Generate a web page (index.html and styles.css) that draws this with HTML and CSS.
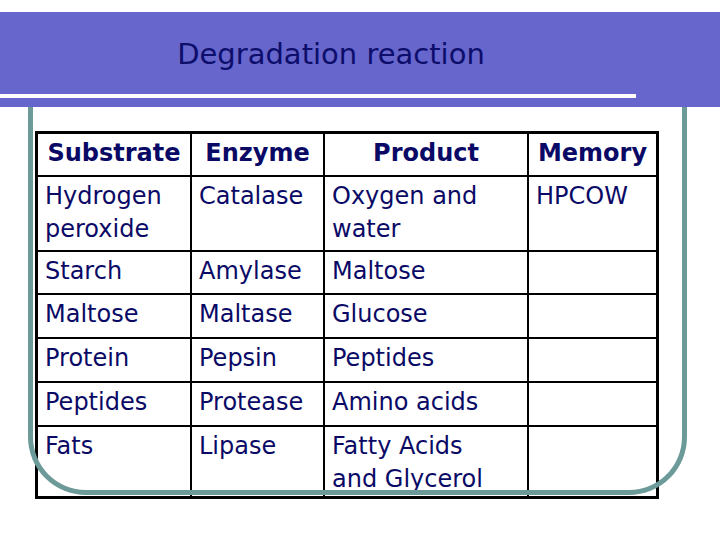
FILE: index.html
```html
<!DOCTYPE html>
<html>
<head>
<meta charset="utf-8">
<link rel="stylesheet" href="styles.css">
</head>
<body>
<div class="slide">
  <header class="band">
    <h1 class="title">Degradation reaction</h1>
    <div class="stripe"></div>
  </header>
  <div class="frame">
    <div class="grid">
      <div class="cell head">Substrate</div>
      <div class="cell head">Enzyme</div>
      <div class="cell head">Product</div>
      <div class="cell head">Memory</div>

      <div class="cell">Hydrogen<br>peroxide</div>
      <div class="cell">Catalase</div>
      <div class="cell">Oxygen and<br>water</div>
      <div class="cell">HPCOW</div>

      <div class="cell">Starch</div>
      <div class="cell">Amylase</div>
      <div class="cell">Maltose</div>
      <div class="cell"></div>

      <div class="cell">Maltose</div>
      <div class="cell">Maltase</div>
      <div class="cell">Glucose</div>
      <div class="cell"></div>

      <div class="cell">Protein</div>
      <div class="cell">Pepsin</div>
      <div class="cell">Peptides</div>
      <div class="cell"></div>

      <div class="cell">Peptides</div>
      <div class="cell">Protease</div>
      <div class="cell">Amino acids</div>
      <div class="cell"></div>

      <div class="cell">Fats</div>
      <div class="cell">Lipase</div>
      <div class="cell">Fatty Acids<br>and Glycerol</div>
      <div class="cell"></div>
    </div>
  </div>
</div>
</body>
</html>
```
FILE: styles.css
```css
html, body {
  margin: 0;
  padding: 0;
  background: #ffffff;
}

.slide {
  width: 720px;
  height: 540px;
  overflow: hidden;
  font-family: "DejaVu Sans", "Liberation Sans", sans-serif;
  color: #0a0a66;
}

.band {
  margin-top: 12px;
  height: 95px;
  background: #6666cc;
  display: flex;
  flex-direction: column;
}

.title {
  margin: 0;
  width: 662px;
  height: 82px;
  box-sizing: border-box;
  padding-top: 28px;
  text-align: center;
  font-weight: normal;
  font-size: 29px;
  line-height: 29px;
  color: #0d0d6b;
}

.stripe {
  width: 636px;
  height: 4px;
  background: #ffffff;
}

.frame {
  position: relative;
  margin-left: 28px;
  width: 659px;
  padding-top: 24px;
}

/* decorative rounded frame drawn over the table */
.frame::after {
  content: "";
  position: absolute;
  left: 0;
  top: 0;
  width: 659px;
  height: 388px;
  box-sizing: border-box;
  border: 5px solid #6c9a98;
  border-top: none;
  border-radius: 0 0 58px 58px;
  pointer-events: none;
}

.grid {
  margin-left: 7px;
  width: 618px;
  display: grid;
  grid-template-columns: 152px 131px 202px 127px;
  grid-template-rows: 41px 73px 41px 42px 42px 42px 69px;
  gap: 2px;
  background: #000000;
  border: 3px solid #000000;
  box-sizing: content-box;
}

.cell {
  background: #ffffff;
  padding: 3px 0 0 7px;
  font-size: 24px;
  line-height: 33px;
  color: #0a0a66;
}

.head {
  padding-left: 0;
  text-align: center;
  font-weight: bold;
}
```
